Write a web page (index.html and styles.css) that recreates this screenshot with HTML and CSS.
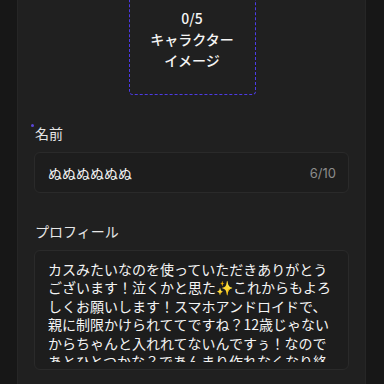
FILE: index.html
```html
<!DOCTYPE html>
<html lang="ja">
<head>
<meta charset="utf-8">
<link rel="stylesheet" href="styles.css">
</head>
<body>
<div class="panel">
  <div class="upload-row">
    <div class="upload">
      <div>0/5</div>
      <div>キャラクター</div>
      <div>イメージ</div>
    </div>
  </div>
  <div class="field name-field">
    <div class="label required">名前</div>
    <div class="input">
      <span class="value">ぬぬぬぬぬぬ</span>
      <span class="count">6/10</span>
    </div>
  </div>
  <div class="field">
    <div class="label">プロフィール</div>
    <div class="textarea">
      <div class="textarea-inner">カスみたいなのを使っていただきありがとうございます！泣くかと思た✨これからもよろしくお願いします！スマホアンドロイドで、親に制限かけられててですね？12歳じゃないからちゃんと入れれてないんですぅ！なのであとひとつかな？であんまり作れなくなり終わりそうです。これからもよろしくお願いします！</div>
    </div>
  </div>
</div>
</body>
</html>
```

FILE: styles.css
```css
* { box-sizing: border-box; }
html, body {
  margin: 0;
  padding: 0;
  height: 100%;
  background: #171717;
  overflow: hidden;
}
body {
  font-family: "Noto Sans CJK JP", "Noto Sans", sans-serif;
  color: #f2f2f2;
}
.panel {
  margin: 0 18px 0 17px;
  height: 100%;
  background: #202020;
  border-left: 1px solid #262626;
  border-right: 1px solid #262626;
  padding: 0 16px;
}
.upload-row {
  display: flex;
  justify-content: center;
  padding-left: 1px;
}
.upload {
  margin-top: -16px;
  width: 127px;
  height: 111px;
  border: 1px dashed #4d3be6;
  border-radius: 4px;
  display: flex;
  flex-direction: column;
  justify-content: center;
  align-items: center;
  font-size: 14px;
  line-height: 21px;
  font-weight: 500;
  color: #f4f4f4;
}
.field {
  margin-top: 28px;
}
.name-field {
  margin-top: 28px;
}
.label {
  position: relative;
  font-size: 14px;
  line-height: 20px;
  color: #e6e6e6;
  padding-left: 1px;
}
.label.required::before {
  content: "";
  position: absolute;
  left: -3px;
  top: 1px;
  width: 3px;
  height: 3px;
  border-radius: 50%;
  background: #5a46d8;
}
.input {
  margin-top: 9px;
  height: 41px;
  border: 1px solid #2a2a2a;
  border-radius: 6px;
  background: #1d1d1d;
  display: flex;
  align-items: center;
  justify-content: space-between;
  padding: 0 12px 0 13px;
}
.value {
  font-size: 14px;
  color: #f4f4f4;
}
.count {
  font-family: "Inter", "Noto Sans", sans-serif;
  font-size: 13px;
  color: #8c8c8c;
}
.textarea {
  margin-top: 9px;
  height: 120px;
  border: 1px solid #2a2a2a;
  border-radius: 6px;
  background: #1d1d1d;
  padding: 9px 14px 7px 13px;
}
.textarea-inner {
  height: 102px;
  overflow: hidden;
  font-size: 14px;
  line-height: 18.4px;
  color: #f4f4f4;
}
```
